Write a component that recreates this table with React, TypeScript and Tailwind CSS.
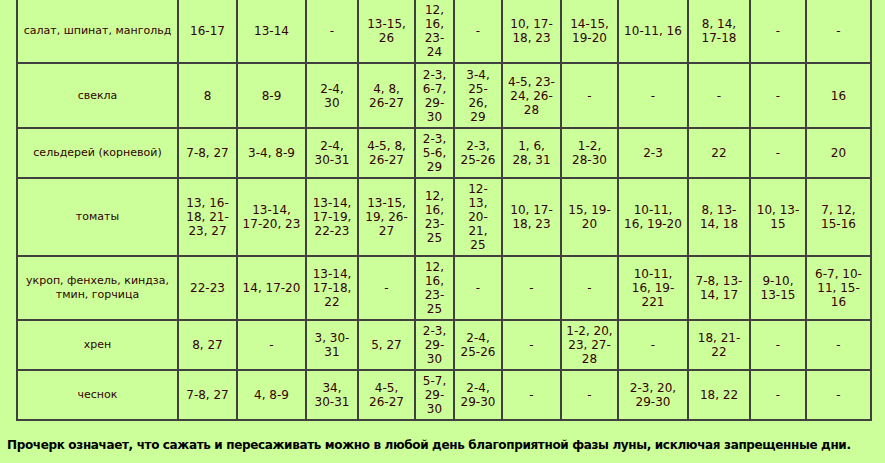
import React from "react";

const widths = [161, 59, 69, 52, 57, 39, 48, 59, 57, 70, 62, 56, 65];

type Row = { label: string[]; h: number; cells: string[][] };

const rows: Row[] = [
  {
    label: ["салат, шпинат, мангольд"],
    h: 64,
    cells: [
      ["16-17"], ["13-14"], ["-"], ["13-15,", "26"], ["12,", "16,", "23-", "24"], ["-"],
      ["10, 17-", "18, 23"], ["14-15,", "19-20"], ["10-11, 16"], ["8, 14,", "17-18"], ["-"], ["-"],
    ],
  },
  {
    label: ["свекла"],
    h: 65,
    cells: [
      ["8"], ["8-9"], ["2-4,", "30"], ["4, 8,", "26-27"], ["2-3,", "6-7,", "29-", "30"], ["3-4,", "25-", "26,", "29"],
      ["4-5, 23-", "24, 26-", "28"], ["-"], ["-"], ["-"], ["-"], ["16"],
    ],
  },
  {
    label: ["сельдерей (корневой)"],
    h: 50,
    cells: [
      ["7-8, 27"], ["3-4, 8-9"], ["2-4,", "30-31"], ["4-5, 8,", "26-27"], ["2-3,", "5-6,", "29"], ["2-3,", "25-26"],
      ["1, 6,", "28, 31"], ["1-2,", "28-30"], ["2-3"], ["22"], ["-"], ["20"],
    ],
  },
  {
    label: ["томаты"],
    h: 78,
    cells: [
      ["13, 16-", "18, 21-", "23, 27"], ["13-14,", "17-20, 23"], ["13-14,", "17-19,", "22-23"], ["13-15,", "19, 26-", "27"],
      ["12,", "16,", "23-", "25"], ["12-", "13,", "20-", "21,", "25"], ["10, 17-", "18, 23"], ["15, 19-", "20"],
      ["10-11,", "16, 19-20"], ["8, 13-", "14, 18"], ["10, 13-", "15"], ["7, 12,", "15-16"],
    ],
  },
  {
    label: ["укроп, фенхель, киндза,", "тмин, горчица"],
    h: 64,
    cells: [
      ["22-23"], ["14, 17-20"], ["13-14,", "17-18,", "22"], ["-"], ["12,", "16,", "23-", "25"], ["-"], ["-"], ["-"],
      ["10-11,", "16, 19-", "221"], ["7-8, 13-", "14, 17"], ["9-10,", "13-15"], ["6-7, 10-", "11, 15-", "16"],
    ],
  },
  {
    label: ["хрен"],
    h: 50,
    cells: [
      ["8, 27"], ["-"], ["3, 30-", "31"], ["5, 27"], ["2-3,", "29-", "30"], ["2-4,", "25-26"], ["-"],
      ["1-2, 20,", "23, 27-", "28"], ["-"], ["18, 21-", "22"], ["-"], ["-"],
    ],
  },
  {
    label: ["чеснок"],
    h: 50,
    cells: [
      ["7-8, 27"], ["4, 8-9"], ["34,", "30-31"], ["4-5,", "26-27"], ["5-7,", "29-", "30"], ["2-4,", "29-30"], ["-"], ["-"],
      ["2-3, 20,", "29-30"], ["18, 22"], ["-"], ["-"],
    ],
  },
];

function Lines({ lines }: { lines: string[] }) {
  return (
    <>
      {lines.map((l, i) => (
        <span key={i} className="block whitespace-nowrap">
          {l}
        </span>
      ))}
    </>
  );
}

export default function App() {
  return (
    <div
      className="w-[885px] h-[463px] overflow-hidden bg-[#ccff99] text-[#330000]"
      style={{ fontFamily: '"DejaVu Sans", Verdana, sans-serif' }}
    >
      <table className="ml-[16px] mt-[-2px] w-[856px] table-fixed border-collapse border-2 border-[#404040]">
        <colgroup>
          {widths.map((w, i) => (
            <col key={i} style={{ width: w }} />
          ))}
        </colgroup>
        <tbody>
          {rows.map((r, ri) => (
            <tr key={ri} style={{ height: r.h }}>
              <td className="border-2 border-[#404040] p-0 text-center align-middle text-[11px] leading-[14px]">
                <Lines lines={r.label} />
              </td>
              {r.cells.map((c, ci) => (
                <td
                  key={ci}
                  className="border-2 border-[#404040] p-0 text-center align-middle text-[12px] leading-[14px]"
                >
                  <Lines lines={c} />
                </td>
              ))}
            </tr>
          ))}
        </tbody>
      </table>
      <p className="mt-[17px] ml-[7px] whitespace-nowrap text-[12px] font-bold leading-[14px] tracking-[-0.35px] text-[#000000]">
        Прочерк означает, что сажать и пересаживать можно в любой день благоприятной фазы луны, исключая запрещенные дни.
      </p>
    </div>
  );
}
